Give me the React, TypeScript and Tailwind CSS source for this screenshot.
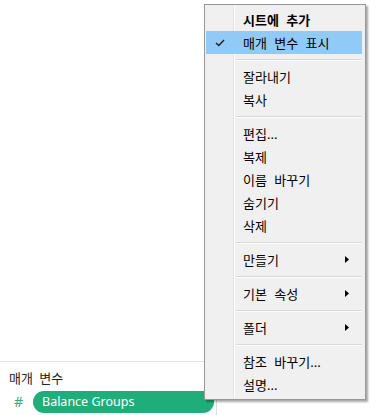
type Item =
  | { kind: "sep" }
  | { kind: "item"; label: string; bold?: boolean; checked?: boolean; active?: boolean; sub?: boolean };

const items: Item[] = [
  { kind: "item", label: "시트에 추가", bold: true },
  { kind: "item", label: "매개 변수 표시", checked: true, active: true },
  { kind: "sep" },
  { kind: "item", label: "잘라내기" },
  { kind: "item", label: "복사" },
  { kind: "sep" },
  { kind: "item", label: "편집..." },
  { kind: "item", label: "복제" },
  { kind: "item", label: "이름 바꾸기" },
  { kind: "item", label: "숨기기" },
  { kind: "item", label: "삭제" },
  { kind: "sep" },
  { kind: "item", label: "만들기", sub: true },
  { kind: "sep" },
  { kind: "item", label: "기본 속성", sub: true },
  { kind: "sep" },
  { kind: "item", label: "폴더", sub: true },
  { kind: "sep" },
  { kind: "item", label: "참조 바꾸기..." },
  { kind: "item", label: "설명..." },
];

const font = { fontFamily: '"Noto Sans", "Noto Sans CJK KR", sans-serif' };

function ContextMenu() {
  return (
    <div
      className="absolute left-[204px] top-[4px] w-[162px] border border-[#979797] bg-[#f0f0f0] py-[3px] px-[1px] shadow-[2px_2px_2px_rgba(0,0,0,0.35)]"
      style={font}
    >
      {/* gutter divider */}
      <div className="absolute left-[28px] top-[1px] bottom-[1px] w-[2px] border-l border-[#e2e3e3]">
        <div className="h-full w-px bg-white" />
      </div>
      {items.map((it, i) =>
        it.kind === "sep" ? (
          <div key={i} className="relative flex h-[11px] items-center pl-[30px] pr-[2px]">
            <div className="w-full border-t border-b border-t-[#d7d7d7] border-b-white" />
          </div>
        ) : (
          <div
            key={i}
            className={`relative flex h-[23px] items-center pl-[37px] pr-[2px] pt-[2px] text-[13px] text-black [word-spacing:4px] ${
              it.active ? "bg-[#91c9f7] mr-[2px]" : ""
            } ${it.bold ? "font-bold" : ""}`}
          >
            {it.checked && (
              <svg className="absolute left-[9px] top-[8px]" width="10" height="8" viewBox="0 0 10 8">
                <path d="M1 4 L3.8 6.6 L9 1" fill="none" stroke="#1e1e1e" strokeWidth="1.4" />
              </svg>
            )}
            <span className="leading-none">{it.label}</span>
            {it.sub && (
              <svg className="absolute right-[15px] top-[8px]" width="4" height="7" viewBox="0 0 4 7">
                <path d="M0 0 L4 3.5 L0 7 Z" fill="#000" />
              </svg>
            )}
          </div>
        )
      )}
    </div>
  );
}

export default function App() {
  return (
    <div className="relative h-[415px] w-[376px] overflow-hidden bg-white" style={font}>
      <div className="flex h-full w-[217px] flex-col">
        <div className="h-[362px] shrink-0 border-b border-[#e3e3e3]" />
        <div className="flex flex-1 flex-col border-r border-[#dcdcdc]">
          <div className="pl-[9px] pt-[7px] text-[13px] leading-[18px] text-[#222] [word-spacing:3px]">매개 변수</div>
          <div className="mt-[4px] flex items-center">
            <span className="w-[33px] pl-[14px] text-[14px] leading-none text-[#3aa878]">#</span>
            <div className="flex h-[22px] w-[181px] items-center rounded-full bg-[#1fae7a] pl-[9px] text-[12.5px] text-white">
              Balance Groups
            </div>
          </div>
        </div>
      </div>
      <ContextMenu />
    </div>
  );
}
